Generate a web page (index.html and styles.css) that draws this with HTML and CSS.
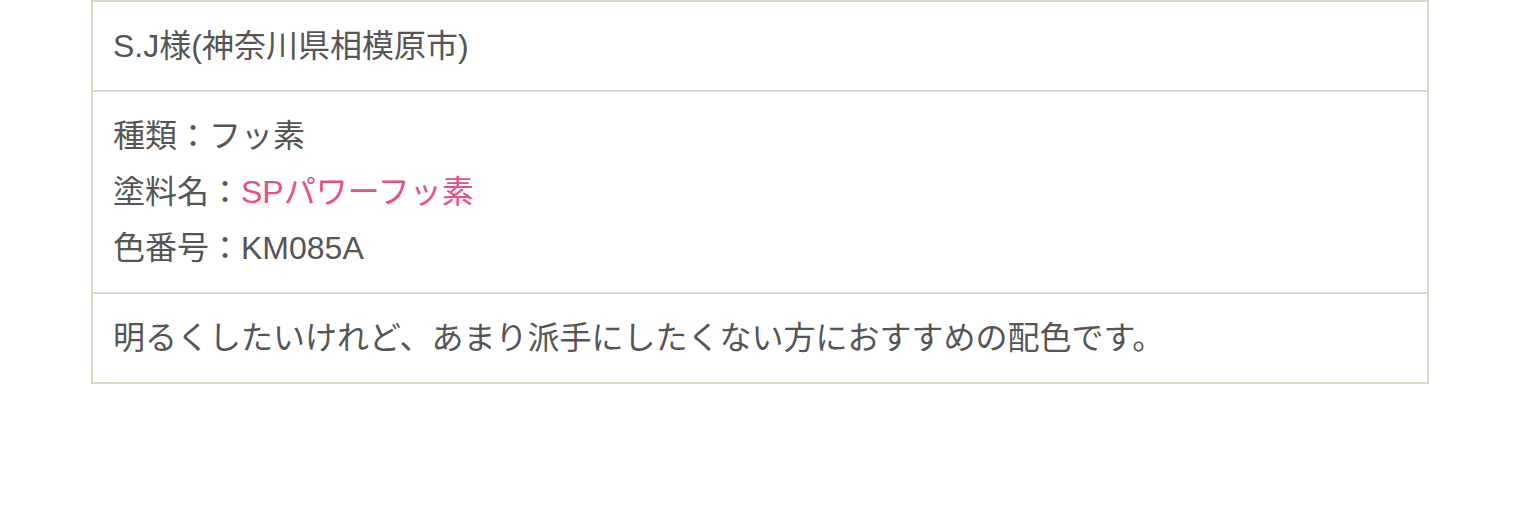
FILE: index.html
```html
<!DOCTYPE html>
<html lang="ja">
<head>
    <meta charset="UTF-8">
    <meta name="viewport" content="width=device-width, initial-scale=1.0">
    <title>施工事例</title>
    <link rel="stylesheet" href="styles.css">
</head>
<body>

<div class="container">
    <!-- Case detail table -->
    <table class="case-table">
        <tbody>
            <tr>
                <td>S.J様(神奈川県相模原市)</td>
            </tr>
            <tr>
                <td>
                    <p>種類：フッ素</p>
                    <p>塗料名：<a href="#" class="paint-link">SPパワーフッ素</a></p>
                    <p>色番号：KM085A</p>
                </td>
            </tr>
            <tr>
                <td>明るくしたいけれど、あまり派手にしたくない方におすすめの配色です。</td>
            </tr>
        </tbody>
    </table>
</div>

</body>
</html>
```

FILE: styles.css
```css
body {
    font-family: "Liberation Sans", "Noto Sans CJK JP", sans-serif;
    background-color: #fff;
    color: #555;
    margin: 0;
    padding: 0;
}
.container {
    width: 1338px;
    margin: 0 auto;
}
.case-table {
    width: 100%;
    border-collapse: collapse;
}
.case-table td {
    border: 2px solid #e0d7c9;
    padding: 16px 20px;
    font-size: 32px;
    line-height: 56px;
    text-align: left;
}
.case-table p {
    margin: 0;
}
.paint-link {
    color: #e8517f;
    text-decoration: none;
}
```
